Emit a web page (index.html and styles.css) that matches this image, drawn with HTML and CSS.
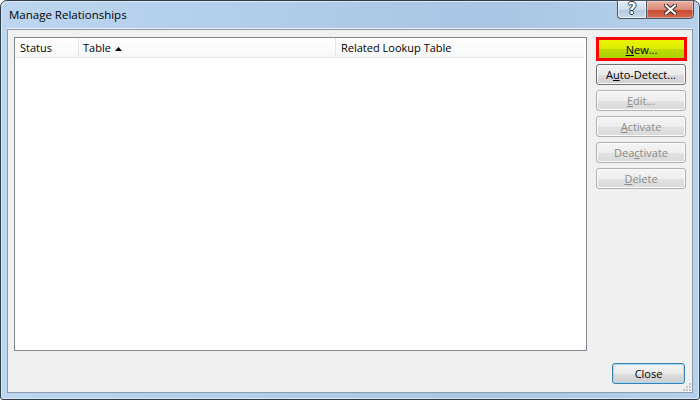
FILE: index.html
```html
<!DOCTYPE html>
<html lang="en">
<head>
    <meta charset="UTF-8">
    <title>Manage Relationships</title>
    <link rel="stylesheet" href="styles.css">
</head>
<body>
    <div class="window">
        <div class="titlebar">
            <span class="title">Manage Relationships</span>
            <div class="caption-buttons">
                <div class="cap-btn cap-help"><span>?</span></div>
                <div class="cap-btn cap-close">
                    <svg width="13" height="11" viewBox="0 0 13 11">
                        <path d="M2 1.5 L11 9.5 M11 1.5 L2 9.5" stroke="#3a2a2a" stroke-width="4.2" stroke-linecap="square" fill="none"/>
                        <path d="M2 1.5 L11 9.5 M11 1.5 L2 9.5" stroke="#ffffff" stroke-width="2.2" stroke-linecap="square" fill="none"/>
                    </svg>
                </div>
            </div>
        </div>

        <div class="panel">
            <div class="main">
                <div class="list">
                    <div class="list-header">
                        <div class="col col-status">Status</div>
                        <div class="col col-table">Table
                            <svg class="sort" width="7" height="4" viewBox="0 0 7 4"><path d="M0 4 L3.5 0 L7 4 Z" fill="#000"/></svg>
                        </div>
                        <div class="col col-related">Related Lookup Table</div>
                    </div>
                </div>

                <div class="actions">
                    <button class="btn btn-new"><u>N</u>ew...</button>
                    <button class="btn">A<u>u</u>to-Detect...</button>
                    <button class="btn" disabled><u>E</u>dit...</button>
                    <button class="btn" disabled><u>A</u>ctivate</button>
                    <button class="btn" disabled>Dea<u>c</u>tivate</button>
                    <button class="btn" disabled><u>D</u>elete</button>
                </div>
            </div>

            <div class="footer">
                <button class="btn btn-close">Close</button>
            </div>

            <svg class="grip" width="8" height="8" viewBox="0 0 8 8">
                <rect x="6" y="0" width="2" height="2" fill="#c0c6cc"/>
                <rect x="3" y="3" width="2" height="2" fill="#c0c6cc"/>
                <rect x="6" y="3" width="2" height="2" fill="#c0c6cc"/>
                <rect x="0" y="6" width="2" height="2" fill="#c0c6cc"/>
                <rect x="3" y="6" width="2" height="2" fill="#c0c6cc"/>
                <rect x="6" y="6" width="2" height="2" fill="#c0c6cc"/>
            </svg>
        </div>
    </div>
</body>
</html>
```

FILE: styles.css
```css
body {
    margin: 0;
    background: #ffffff;
    font-family: "Open Sans", "Noto Sans", sans-serif;
}

.window {
    width: 700px;
    height: 400px;
    box-sizing: border-box;
    border: 1px solid #2e3b48;
    border-radius: 7px 7px 3px 3px;
    background: linear-gradient(90deg, #bcd6f0 0%, #b0cce9 40%, #a9c5e3 70%, #b6d1ec 100%);
    padding: 0 6px 6px 6px;
    display: flex;
    flex-direction: column;
    box-shadow: inset 1px 1px 0 #dbe9f7, inset -1px -1px 0 #dbe9f7;
}

.titlebar {
    height: 27px;
    border-bottom: 1px solid #e9f1f9;
    display: flex;
    align-items: flex-start;
    justify-content: space-between;
}

.title {
    padding-left: 2px;
    font-size: 11.5px;
    line-height: 28px;
    color: #000;
}

.caption-buttons {
    display: flex;
    margin-top: -1px;
    margin-right: -1px;
}

.cap-btn {
    height: 19px;
    box-sizing: border-box;
    border: 1px solid #4a5866;
    display: flex;
    align-items: center;
    justify-content: center;
}

.cap-help {
    width: 29px;
    border-right: none;
    border-radius: 0 0 0 4px;
    background: linear-gradient(#e4edf7 0%, #cddcec 50%, #b4c8de 51%, #c9dbee 100%);
    box-shadow: inset 0 0 0 1px rgba(255, 255, 255, 0.6);
}

.cap-help span {
    font-family: "DejaVu Sans", sans-serif;
    font-weight: bold;
    font-size: 15px;
    line-height: 1;
    color: #ffffff;
    text-shadow: 1px 0 0 #2d3a47, -1px 0 0 #2d3a47, 0 1px 0 #2d3a47, 0 -1px 0 #2d3a47;
}

.cap-close {
    width: 48px;
    border-radius: 0 0 4px 0;
    background: linear-gradient(#eab0a2 0%, #db8b79 50%, #c7472f 51%, #d56a4e 100%);
    box-shadow: inset 0 0 0 1px rgba(255, 255, 255, 0.35);
}

.panel {
    flex: 1;
    position: relative;
    border: 1px solid #8e9aa7;
    background: #f0f0f0;
    display: flex;
    flex-direction: column;
}

.main {
    display: flex;
    padding: 7px 0 0 6px;
}

.list {
    width: 573px;
    height: 314px;
    box-sizing: border-box;
    border: 1px solid #828790;
    background: #ffffff;
}

.list-header {
    display: flex;
    height: 20px;
    box-sizing: border-box;
    border-bottom: 1px solid #e3e5e8;
    margin-right: 2px;
    background: linear-gradient(#ffffff, #f7f8f9);
    font-size: 11px;
    line-height: 19px;
    color: #000;
}

.col {
    box-sizing: border-box;
    padding-left: 5px;
    border-right: 1px solid #e3e5e8;
    white-space: nowrap;
}

.col-status {
    width: 64px;
}

.col-table {
    width: 257px;
    padding-left: 4px;
}

.sort {
    margin-left: 1px;
    vertical-align: 1px;
}

.col-related {
    flex: 1;
    border-right: none;
}

.actions {
    margin-left: 9px;
    display: flex;
    flex-direction: column;
}

.btn {
    display: block;
    width: 90px;
    height: 21px;
    box-sizing: border-box;
    margin: 0 0 5px 0;
    padding: 0;
    border: 1px solid #707070;
    border-radius: 3px;
    background: linear-gradient(#f2f2f2 0%, #ebebeb 50%, #dddddd 51%, #cfcfcf 100%);
    box-shadow: inset 0 0 0 1px #fbfbfb;
    font-family: "Open Sans", "Noto Sans", sans-serif;
    font-size: 11px;
    line-height: 18px;
    color: #000;
    text-align: center;
}

.btn:disabled {
    border-color: #adb2b5;
    color: #8a8a8a;
    background: linear-gradient(#f4f4f4 0%, #eeeeee 50%, #e2e2e2 51%, #d9d9d9 100%);
}

.btn-new {
    width: 91px;
    height: 24px;
    margin-bottom: 3px;
    border: 3px solid #ff0000;
    border-radius: 0;
    box-shadow: none;
    line-height: 17px;
    background: linear-gradient(#ecf400 0%, #dcec00 50%, #bedc00 51%, #aad200 100%);
}

.footer {
    display: flex;
    justify-content: flex-end;
    padding: 12px 7px 0 0;
}

.btn-close {
    width: 73px;
    margin: 0;
    border-color: #3c7fb1;
    box-shadow: inset 0 0 0 1px #9fdcf8;
}

.grip {
    position: absolute;
    right: 1px;
    bottom: 1px;
}
```
